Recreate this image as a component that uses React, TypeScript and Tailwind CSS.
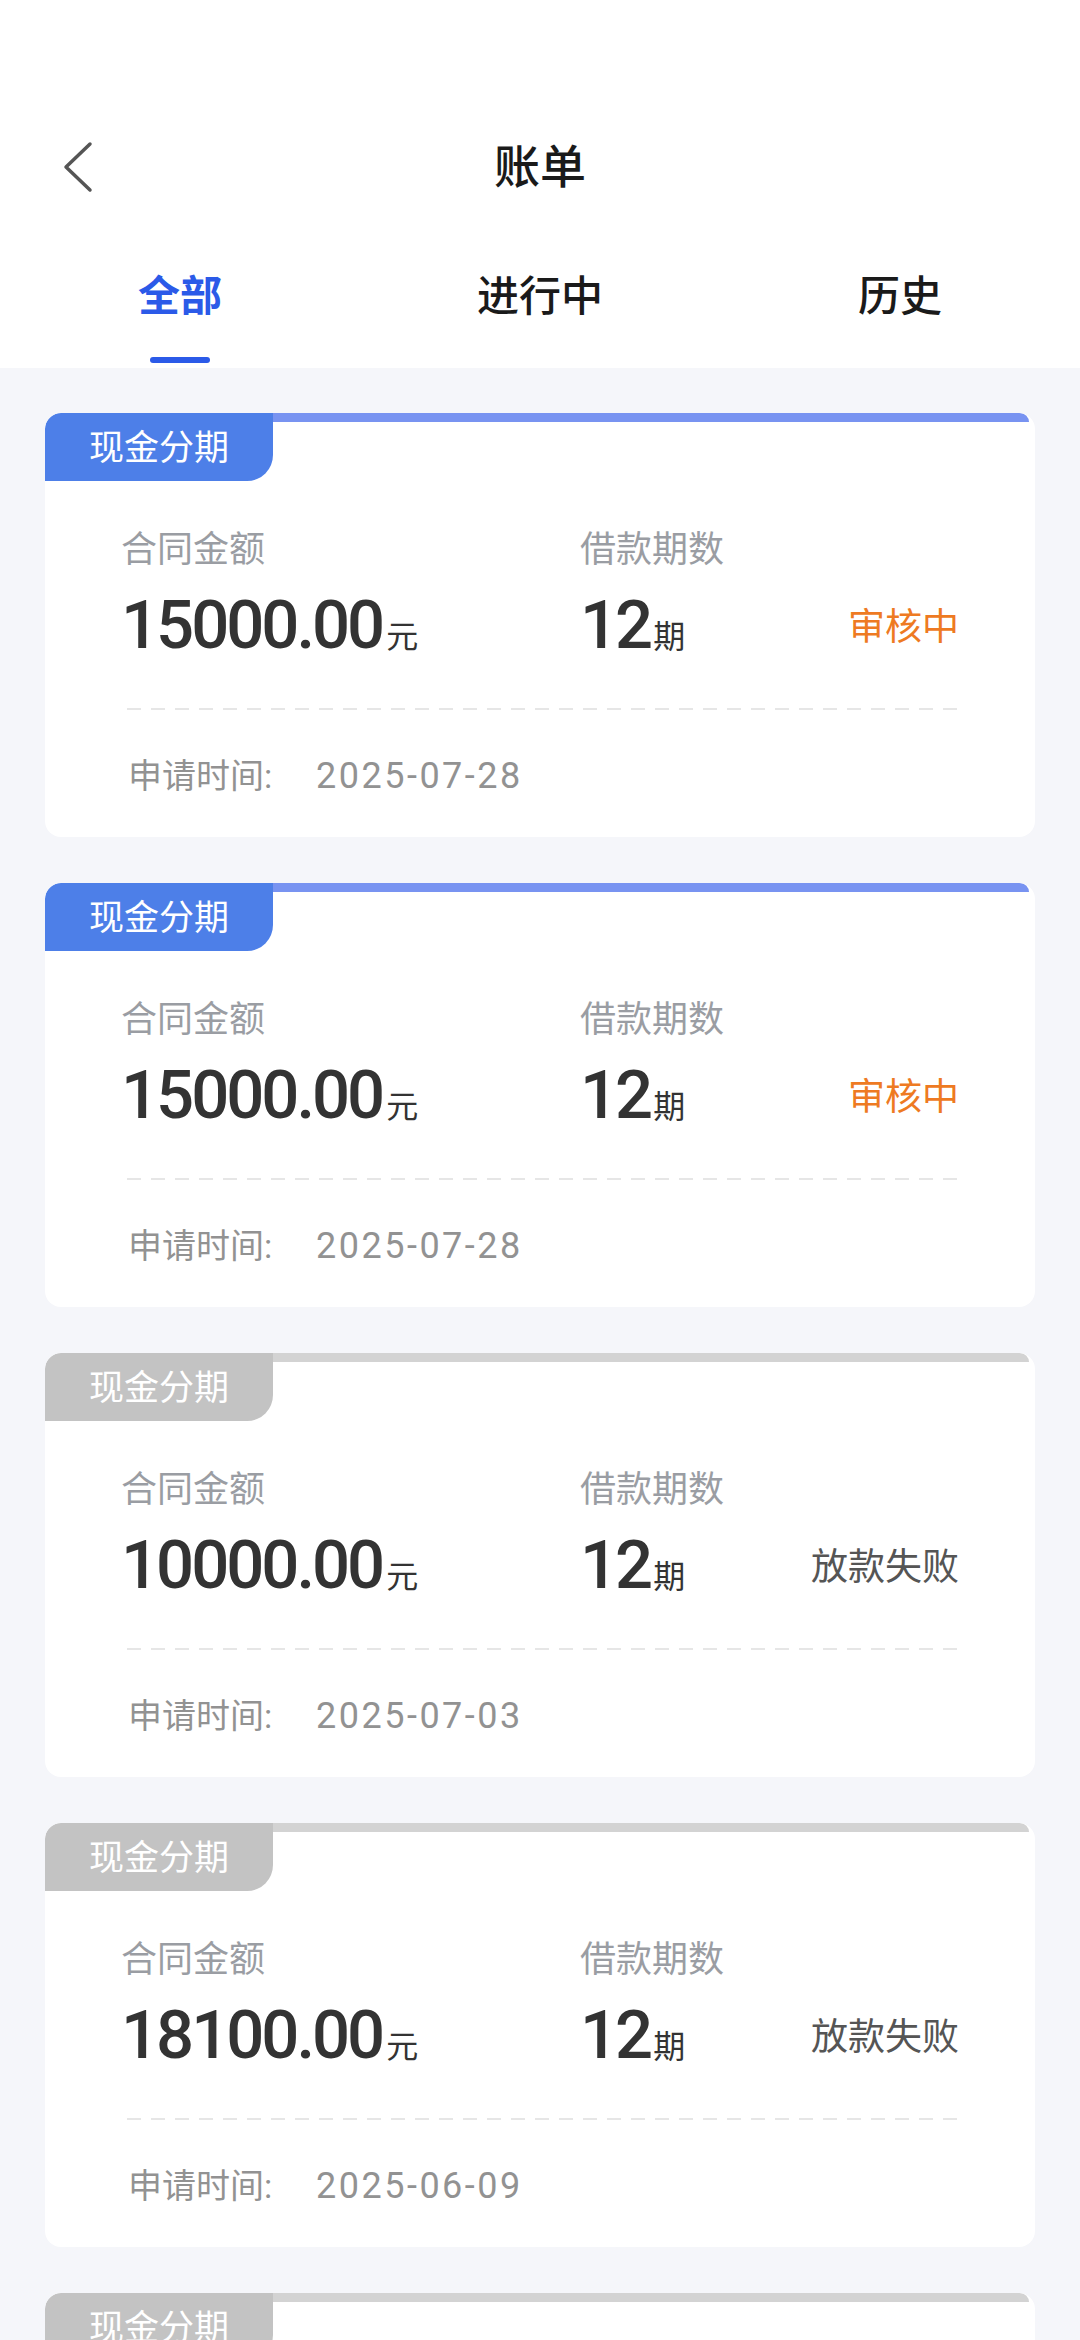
import React from 'react';

type Bill = {
  active: boolean;
  amount: string;
  term: string;
  status: string;
  date: string;
};

const bills: Bill[] = [
  { active: true, amount: '15000.00', term: '12', status: '审核中', date: '2025-07-28' },
  { active: true, amount: '15000.00', term: '12', status: '审核中', date: '2025-07-28' },
  { active: false, amount: '10000.00', term: '12', status: '放款失败', date: '2025-07-03' },
  { active: false, amount: '18100.00', term: '12', status: '放款失败', date: '2025-06-09' },
  { active: false, amount: '20000.00', term: '12', status: '放款失败', date: '2025-05-21' },
];

const BillCard: React.FC<{ bill: Bill }> = ({ bill }) => {
  return (
    <div className="bg-white rounded-[16px] overflow-hidden">
      <div className="flex h-[68px]">
        <div
          className={
            bill.active
              ? 'w-[228px] h-[68px] rounded-tl-[16px] rounded-br-[26px] bg-[#4d7fe8] flex items-center justify-center text-white text-[35px] leading-none pt-[2px]'
              : 'w-[228px] h-[68px] rounded-tl-[16px] rounded-br-[26px] bg-[#c3c3c3] flex items-center justify-center text-white text-[35px] leading-none pt-[2px]'
          }
        >
          现金分期
        </div>
        <div className="flex-1">
          <div
            className={
              bill.active
                ? 'h-[9px] mr-[6px] rounded-tr-[14px] bg-[#7893f1]'
                : 'h-[9px] mr-[6px] rounded-tr-[14px] bg-[#d3d3d3]'
            }
          />
        </div>
      </div>

      <div className="px-[76px] pt-[45px] pb-[37px]">
        <div className="flex h-[48px] items-center text-[36px] leading-[48px] text-[#9a9da3]">
          <div className="w-[459px]">合同金额</div>
          <div>借款期数</div>
        </div>

        <div className="mt-[13px] h-[76px] flex items-center">
          <div className="w-[459px] flex items-baseline text-[#333333]">
            <span className="text-[67px] leading-[76px] font-medium tracking-[-3px]">{bill.amount}</span>
            <span className="text-[32px] ml-[4px]">元</span>
          </div>
          <div className="flex-1 flex items-baseline text-[#333333]">
            <span className="text-[67px] leading-[76px] font-medium tracking-[-3px]">{bill.term}</span>
            <span className="text-[32px] ml-[3px]">期</span>
          </div>
          <div
            className={
              bill.active
                ? 'text-[37px] text-[#ee7a22] leading-none pt-[5px]'
                : 'text-[37px] text-[#555555] leading-none pt-[5px]'
            }
          >
            {bill.status}
          </div>
        </div>

        <div className="mt-[45px] ml-[6px] h-[2px] bg-[repeating-linear-gradient(to_right,#e6e6e6_0px,#e6e6e6_14px,transparent_14px,transparent_24px)]" />

        <div className="mt-[42px] ml-[7px] h-[48px] flex items-center text-[#929292]">
          <span className="text-[34px] w-[188px]">申请时间:</span>
          <span className="text-[36px] tracking-[2.5px]">{bill.date}</span>
        </div>
      </div>
    </div>
  );
};

const App: React.FC = () => {
  return (
    <div className="min-h-screen bg-[#f5f6fa] font-['Roboto','Noto_Sans_CJK_SC',sans-serif]">
      <div className="bg-white">
        <div className="h-[120px]" />
        <div className="h-[94px] grid grid-cols-[1fr_auto_1fr] items-center">
          <div className="pl-[62px]">
            <svg width="32" height="52" viewBox="0 0 32 52" fill="none">
              <polyline
                points="28,3 4,26 28,49"
                stroke="#555555"
                strokeWidth="3.5"
                strokeLinecap="round"
                strokeLinejoin="round"
              />
            </svg>
          </div>
          <div className="text-[46px] font-medium text-[#1a1a1a] leading-none">账单</div>
          <div />
        </div>
        <div className="grid grid-cols-3">
          <div className="flex flex-col items-center pt-[55px] pb-[5px]">
            <div className="h-[56px] leading-[56px] text-[42px] font-bold text-[#2b5ae8]">全部</div>
            <div className="mt-[32px] w-[60px] h-[6px] rounded-full bg-[#2b5ae8]" />
          </div>
          <div className="flex flex-col items-center pt-[55px] pb-[5px]">
            <div className="h-[56px] leading-[56px] text-[42px] font-medium text-[#1a1a1a]">进行中</div>
            <div className="mt-[32px] w-[60px] h-[6px]" />
          </div>
          <div className="flex flex-col items-center pt-[55px] pb-[5px]">
            <div className="h-[56px] leading-[56px] text-[42px] font-medium text-[#1a1a1a]">历史</div>
            <div className="mt-[32px] w-[60px] h-[6px]" />
          </div>
        </div>
      </div>

      <div className="px-[45px] pt-[45px] pb-[45px] flex flex-col gap-[46px]">
        {bills.map((bill, i) => (
          <BillCard key={i} bill={bill} />
        ))}
      </div>
    </div>
  );
};

export default App;
